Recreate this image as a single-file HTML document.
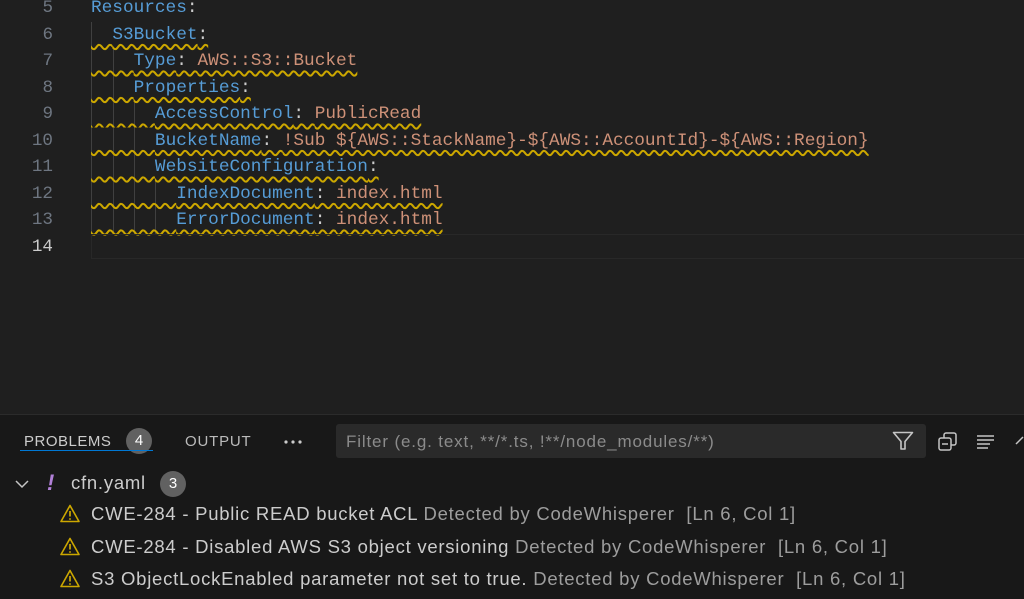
<!DOCTYPE html>
<html><head><style>
body{margin:0;width:1024px;height:598px;overflow:hidden;background:#1f1f1f;font-family:"Liberation Sans",sans-serif;position:relative}
.ed{position:absolute;left:0;top:0;width:1024px;height:414px;background:#1f1f1f}
.ln{position:absolute;left:0;width:53px;text-align:right;font:17.6px/26.5px "Liberation Mono",monospace;color:#6e7681}
.cl{position:absolute;left:91px;font:17.75px/26.5px "Liberation Mono",monospace;color:#cccccc;white-space:pre}
.k{color:#569cd6}.v{color:#ce9178}.p{color:#cccccc}
.sq{text-decoration:underline wavy #cca700;text-decoration-thickness:1.5px;text-underline-offset:5px}
.g{position:absolute;width:1px;background:#404040}
.panel{position:absolute;left:0;top:414px;width:1024px;height:184px;background:#181818;border-top:1px solid #2b2b2b}
.t{position:absolute;font-size:15px;color:#cccccc;letter-spacing:0.5px}
.badge{position:absolute;width:26px;height:26px;border-radius:13px;background:#616161;color:#fff;font-size:15px;text-align:center;line-height:26px}
.row{position:absolute;font-size:18.5px;letter-spacing:0.75px;color:#cccccc;white-space:nowrap}
.d{color:#9d9d9d}
.warn{position:absolute;left:60px}
</style></head><body>
<div class="ed">
<div class="ln" style="top:-5px">5</div>
<div class="ln" style="top:21.5px">6</div>
<div class="ln" style="top:48px">7</div>
<div class="ln" style="top:74.5px">8</div>
<div class="ln" style="top:101px">9</div>
<div class="ln" style="top:127.5px">10</div>
<div class="ln" style="top:154px">11</div>
<div class="ln" style="top:180.5px">12</div>
<div class="ln" style="top:207px">13</div>
<div class="ln" style="top:233.5px;color:#cccccc">14</div>
<div class="g" style="left:91px;top:22px;height:212px"></div>
<div class="g" style="left:113px;top:48px;height:186px"></div>
<div class="g" style="left:134px;top:101px;height:133px"></div>
<div class="g" style="left:155px;top:180px;height:54px"></div>
<div class="cl" style="top:-5px"><span class="k">Resources</span>:</div>
<div class="cl" style="top:21.5px"><span class="sq">  <span class="k">S3Bucket</span>:</span></div>
<div class="cl" style="top:48px"><span class="sq">    <span class="k">Type</span>: <span class="v">AWS::S3::Bucket</span></span></div>
<div class="cl" style="top:74.5px"><span class="sq">    <span class="k">Properties</span>:</span></div>
<div class="cl" style="top:101px"><span class="sq">      <span class="k">AccessControl</span>: <span class="v">PublicRead</span></span></div>
<div class="cl" style="top:127.5px"><span class="sq">      <span class="k">BucketName</span>: <span class="v">!Sub ${AWS::StackName}-${AWS::AccountId}-${AWS::Region}</span></span></div>
<div class="cl" style="top:154px"><span class="sq">      <span class="k">WebsiteConfiguration</span>:</span></div>
<div class="cl" style="top:180.5px"><span class="sq">        <span class="k">IndexDocument</span>: <span class="v">index.html</span></span></div>
<div class="cl" style="top:207px"><span class="sq">        <span class="k">ErrorDocument</span>: <span class="v">index.html</span></span></div>
<div style="position:absolute;left:91px;top:234px;width:933px;height:25px;border:1px solid #282828;border-right:none;box-sizing:border-box"></div>
</div>
<div class="panel">
<div class="t" style="left:24px;top:18px">PROBLEMS</div>
<div class="badge" style="left:126px;top:13px">4</div>
<div style="position:absolute;left:20px;top:35px;width:133px;height:1px;background:#0078d4"></div>
<div class="t" style="left:185px;top:18px;color:#bbbbbb;letter-spacing:0.8px">OUTPUT</div>
<svg style="position:absolute;left:283px;top:24px" width="20" height="6" viewBox="0 0 20 6"><circle cx="3" cy="3" r="1.6" fill="#ccc"/><circle cx="10" cy="3" r="1.6" fill="#ccc"/><circle cx="17" cy="3" r="1.6" fill="#ccc"/></svg>
<div style="position:absolute;left:336px;top:9px;width:590px;height:34px;background:#2a2a2a;border-radius:3px"></div>
<div style="position:absolute;left:346px;top:17px;font-size:17px;letter-spacing:0.85px;color:#8b8b8b">Filter (e.g. text, **/*.ts, !**/node_modules/**)</div>
<svg style="position:absolute;left:892px;top:16px" width="22" height="20" viewBox="0 0 22 20"><path d="M1.5 1.5h19l-7.5 9v7.5h-4v-7.5z" fill="none" stroke="#c5c5c5" stroke-width="1.6" stroke-linejoin="round"/></svg>
<svg style="position:absolute;left:938px;top:17px" width="20" height="20" viewBox="0 0 20 20"><rect x="6" y="1" width="12" height="12" rx="2" fill="none" stroke="#c5c5c5" stroke-width="1.5"/><rect x="1" y="6" width="12" height="12" rx="2" fill="#181818" stroke="#c5c5c5" stroke-width="1.5"/><path d="M4 12h6" stroke="#c5c5c5" stroke-width="1.5"/></svg>
<svg style="position:absolute;left:976px;top:19px" width="20" height="16" viewBox="0 0 20 16"><path d="M1 2h17M1 6h17M1 10h13M1 14h11" stroke="#c5c5c5" stroke-width="1.5"/></svg>
<svg style="position:absolute;left:1014px;top:18px" width="10" height="14" viewBox="0 0 10 14"><path d="M2 11l7-7" stroke="#c5c5c5" stroke-width="1.5"/></svg>
<svg style="position:absolute;left:14px;top:63px" width="16" height="12" viewBox="0 0 16 12"><path d="M2 3l6 6 6-6" fill="none" stroke="#c5c5c5" stroke-width="1.5"/></svg>
<div style="position:absolute;left:47px;top:55px;font-size:22px;color:#b180d7;font-style:italic;font-weight:bold">!</div>
<div class="row" style="left:71px;top:57px">cfn.yaml</div>
<div class="badge" style="left:160px;top:56px">3</div>
<svg class="warn" style="top:89px" width="20" height="19" viewBox="0 0 20 19"><path d="M10 1.5L1 17.5h18z" fill="none" stroke="#cca700" stroke-width="1.6" stroke-linejoin="round"/><path d="M10 7v5.5M10 14.2v1.6" stroke="#cca700" stroke-width="1.7"/></svg>
<svg class="warn" style="top:122px" width="20" height="19" viewBox="0 0 20 19"><path d="M10 1.5L1 17.5h18z" fill="none" stroke="#cca700" stroke-width="1.6" stroke-linejoin="round"/><path d="M10 7v5.5M10 14.2v1.6" stroke="#cca700" stroke-width="1.7"/></svg>
<svg class="warn" style="top:154px" width="20" height="19" viewBox="0 0 20 19"><path d="M10 1.5L1 17.5h18z" fill="none" stroke="#cca700" stroke-width="1.6" stroke-linejoin="round"/><path d="M10 7v5.5M10 14.2v1.6" stroke="#cca700" stroke-width="1.7"/></svg>
<div class="row" style="left:91px;top:88px">CWE-284 - Public READ bucket ACL <span class="d">Detected by CodeWhisperer &nbsp;[Ln 6, Col 1]</span></div>
<div class="row" style="left:91px;top:121px">CWE-284 - Disabled AWS S3 object versioning <span class="d">Detected by CodeWhisperer &nbsp;[Ln 6, Col 1]</span></div>
<div class="row" style="left:91px;top:153px">S3 ObjectLockEnabled parameter not set to true. <span class="d">Detected by CodeWhisperer &nbsp;[Ln 6, Col 1]</span></div>
</div>
</body></html>
